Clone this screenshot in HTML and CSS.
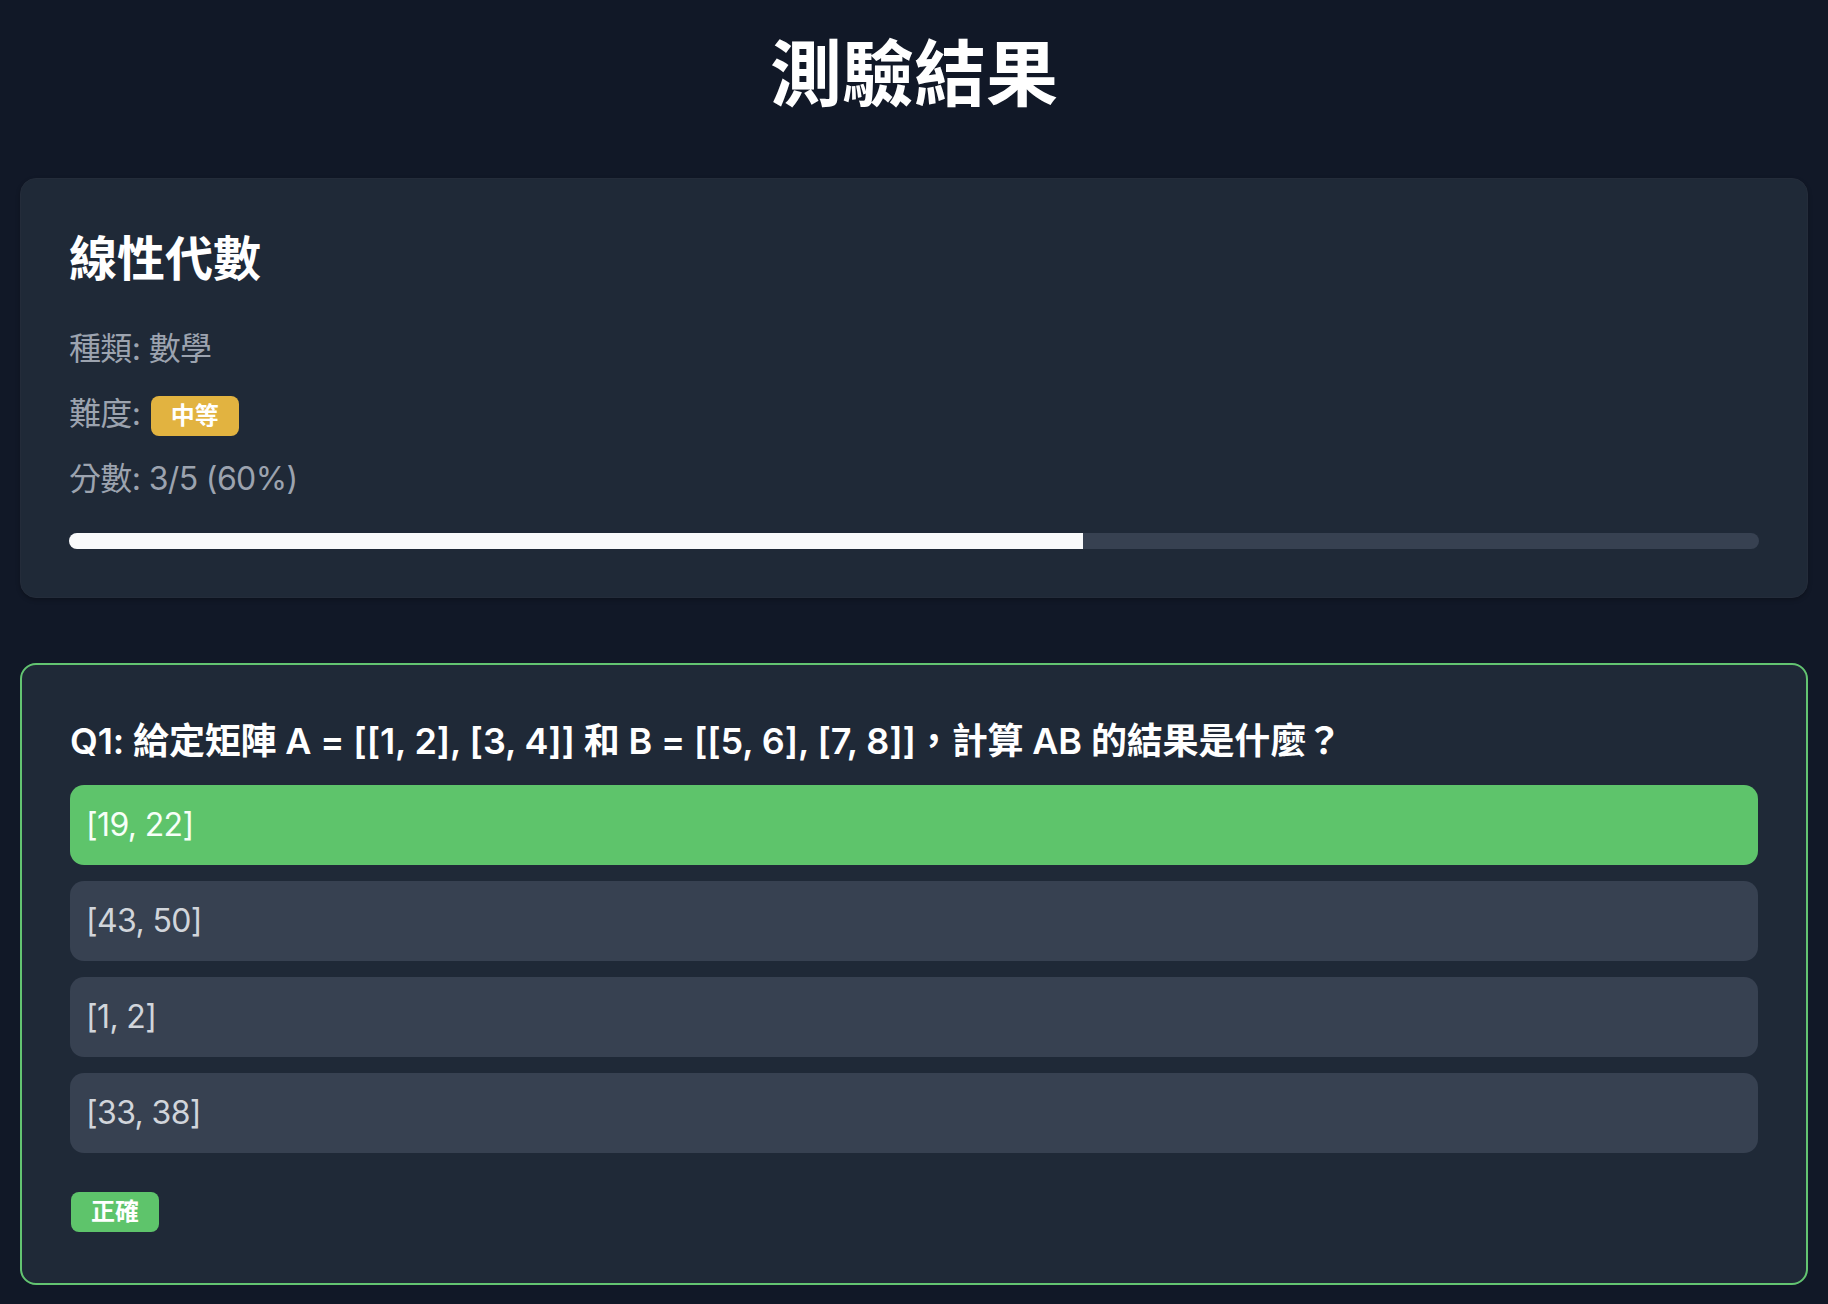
FILE: index.html
```html
<!DOCTYPE html>
<html lang="zh-Hant">
<head>
<meta charset="utf-8">
<title>測驗結果</title>
<link rel="stylesheet" href="styles.css">
</head>
<body>
<main class="page">
  <h1 class="page-title">測驗結果</h1>

  <section class="card summary">
    <h2 class="quiz-name">線性代數</h2>
    <p class="meta">種類: 數學</p>
    <p class="meta">難度: <span class="badge badge-medium">中等</span></p>
    <p class="meta">分數: 3/5 (60%)</p>
    <div class="progress"><div class="progress-fill" style="width:60%"></div></div>
  </section>

  <section class="card question correct">
    <h3 class="question-text">Q1: 給定矩陣 A = [[1, 2], [3, 4]] 和 B = [[5, 6], [7, 8]]，計算 AB 的結果是什麼？</h3>
    <ul class="options">
      <li class="option option-correct">[19, 22]</li>
      <li class="option">[43, 50]</li>
      <li class="option">[1, 2]</li>
      <li class="option">[33, 38]</li>
    </ul>
    <div class="result"><span class="badge badge-correct">正確</span></div>
  </section>
</main>
</body>
</html>
```

FILE: styles.css
```css
* { box-sizing: border-box; }

html, body {
  margin: 0;
  background: #111827;
}

body {
  font-family: Inter, "Noto Sans CJK TC", "Noto Sans", sans-serif;
  color: #f9fafb;
}

.page {
  padding: 34px 20px 20px;
}

.page-title {
  margin: 0 0 64px;
  text-align: center;
  font-size: 72px;
  line-height: 80px;
  font-weight: 700;
  color: #ffffff;
}

.card {
  background: #1f2937;
  border-radius: 16px;
  padding: 48px;
}

.summary {
  border: 1px solid #242c3a;
  box-shadow: 0 2px 4px rgba(0, 0, 0, 0.25);
}

.quiz-name {
  margin: 0 0 34px;
  font-size: 48px;
  line-height: 64px;
  font-weight: 700;
  color: #ffffff;
}

.meta {
  margin: 0 0 17px;
  font-size: 32px;
  line-height: 48px;
  letter-spacing: -0.02em;
  color: #9ca3af;
}

.meta-label {
  letter-spacing: 0;
}

.badge {
  display: inline-block;
  vertical-align: middle;
  margin-left: 2px;
  padding: 4px 20px;
  border-radius: 8px;
  font-size: 24px;
  line-height: 32px;
  font-weight: 700;
  letter-spacing: 0;
  color: #ffffff;
}

.badge-medium { background: #e2b340; }
.badge-correct { background: #5ec46b; }

.progress {
  margin-top: 30px;
  height: 16px;
  border-radius: 8px;
  background: #374151;
  overflow: hidden;
}

.progress-fill {
  height: 100%;
  background: #f9fafb;
}

.question {
  margin-top: 65px;
  border: 2px solid #63c471;
  padding-bottom: 51px;
}

.question-text {
  margin: 0 0 16px;
  font-size: 36px;
  line-height: 56px;
  font-weight: 600;
  letter-spacing: -0.004em;
  color: #ffffff;
}

.options {
  list-style: none;
  margin: 0;
  padding: 0;
  display: flex;
  flex-direction: column;
  gap: 16px;
}

.option {
  padding: 16px;
  border-radius: 14px;
  background: #374151;
  font-size: 32px;
  line-height: 48px;
  letter-spacing: -0.02em;
  color: #d1d5db;
}

.option-correct {
  background: #5ec46b;
  color: #f7fff8;
}

.result {
  display: flex;
  margin-top: 39px;
}

.result .badge {
  margin-left: 1px;
}
```
